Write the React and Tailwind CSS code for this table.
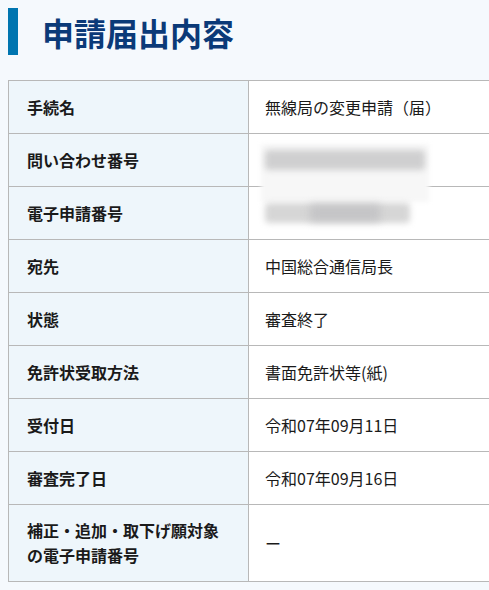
const rows = [
  { label: "手続名", value: "無線局の変更申請（届）" },
  { label: "問い合わせ番号", blur: "a" },
  { label: "電子申請番号", blur: "b" },
  { label: "宛先", value: "中国総合通信局長" },
  { label: "状態", value: "審査終了" },
  { label: "免許状受取方法", value: "書面免許状等(紙)" },
  { label: "受付日", value: "令和07年09月11日" },
  { label: "審査完了日", value: "令和07年09月16日" },
];

export default function App() {
  return (
    <div
      className="min-h-[590px] w-[489px] overflow-hidden bg-[#f5f9fd] pl-2 pt-2"
      style={{ fontFamily: '"Noto Sans CJK JP", "Noto Sans", sans-serif' }}
    >
      {/* Title */}
      <div className="flex h-[47px] items-center">
        <div className="h-[47px] w-[10px] bg-[#0075b0]" />
        <h1 className="ml-[24px] text-[32px] font-bold leading-none text-[#0b3a78]">
          申請届出内容
        </h1>
      </div>

      {/* Table */}
      <table className="mt-[25px] w-[482px] border-collapse text-[16px] text-[#1a1a1a]">
        <tbody>
          {rows.map((r) => (
            <tr key={r.label} className="h-[53px]">
              <th className="w-[240px] border border-[#b8b8b8] bg-[#eef6fb] pl-[18px] text-left font-bold">
                {r.label}
              </th>
              <td className="border border-r-0 border-[#b8b8b8] bg-white pl-4">
                {r.value}
                {r.blur === "a" && (
                  <div className="relative h-[20px]">
                    <div className="absolute -top-[6px] left-[-4px] h-[58px] w-[168px] bg-[#f7f7f7] blur-[2px]" />
                    <div className="absolute left-0 top-0 h-[20px] w-[160px] rounded bg-[#cfcfd0] blur-[3px]" />
                  </div>
                )}
                {r.blur === "b" && (
                  <div className="relative h-[20px]">
                    <div className="absolute left-0 top-0 h-[20px] w-[145px] rounded bg-[#d6d6d6] blur-[3px]" />
                    <div className="absolute left-[45px] top-[2px] h-[16px] w-[70px] bg-[#c4c4c6] blur-[4px]" />
                  </div>
                )}
              </td>
            </tr>
          ))}
          <tr className="h-[77px]">
            <th className="border border-[#b8b8b8] bg-[#eef6fb] pl-[18px] text-left font-bold leading-[25px]">
              補正・追加・取下げ願対象
              <br />
              の電子申請番号
            </th>
            <td className="border border-r-0 border-[#b8b8b8] bg-white pl-4">ー</td>
          </tr>
        </tbody>
      </table>
    </div>
  );
}
